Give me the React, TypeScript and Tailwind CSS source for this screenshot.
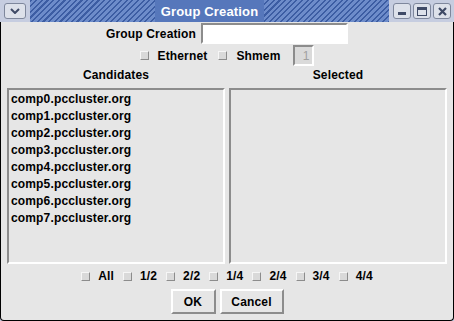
import React from 'react'

const HOSTS = Array.from({ length: 8 }, (_, i) => `comp${i}.pccluster.org`)
const RANGES = ['All', '1/2', '2/2', '1/4', '2/4', '3/4', '4/4']

function Check({ label, gap = 'gap-[8px]' }: { label: string; gap?: string }) {
  return (
    <label className={`flex items-center ${gap}`}>
      <span className="w-[9px] h-[9px] bg-[#d9d9d9] border border-t-[#f6f6f6] border-l-[#f6f6f6] border-b-[#8c8c8c] border-r-[#8c8c8c]" />
      <span>{label}</span>
    </label>
  )
}

function TitleButton({ children, w = 'w-[18px]' }: { children: React.ReactNode; w?: string }) {
  return (
    <div className={`${w} h-[16px] rounded-[3px] border border-[#7e879c] bg-[#dde1ea] flex items-center justify-center text-[#3f4a66]`}>
      {children}
    </div>
  )
}

function Sunken({ className = '', children }: { className?: string; children?: React.ReactNode }) {
  return (
    <div className={`border-2 border-t-[#8c8c8c] border-l-[#8c8c8c] border-b-white border-r-white ${className}`}>
      {children}
    </div>
  )
}

export default function App() {
  return (
    <div
      className="w-[454px] h-[321px] flex flex-col bg-[#c6cde0] text-[12px] tracking-[0.15px] font-bold text-black select-none"
      style={{ fontFamily: '"Liberation Sans", Arial, sans-serif' }}
    >
      {/* title bar */}
      <div className="h-[22px] flex items-center pl-[4px] pr-[3px] gap-[2px]">
        <TitleButton w="w-[22px]">
          <svg width="10" height="6" viewBox="0 0 10 6">
            <path d="M1 1 L5 5 L9 1" stroke="currentColor" strokeWidth="2" fill="none" />
          </svg>
        </TitleButton>
        <div className="flex-1 h-[22px] mx-[2px] flex items-center justify-center bg-[repeating-linear-gradient(135deg,#3c5da3_0px,#3c5da3_1.5px,#6d8cca_1.5px,#6d8cca_4px)]">
          <span className="px-[6px] bg-[#5677bb] text-white text-[13px] leading-[22px] pt-[1px]">Group Creation</span>
        </div>
        <TitleButton>
          <span className="w-[8px] h-[3px] bg-current mt-[4px]" />
        </TitleButton>
        <TitleButton>
          <span className="w-[10px] h-[9px] border border-current border-t-[3px]" />
        </TitleButton>
        <TitleButton>
          <svg width="9" height="9" viewBox="0 0 9 9">
            <path d="M1 1 L8 8 M8 1 L1 8" stroke="currentColor" strokeWidth="2.2" />
          </svg>
        </TitleButton>
      </div>

      {/* body */}
      <div className="flex-1 flex flex-col bg-[#e6e6e6] border border-t-0 border-black rounded-b-[4px] px-[6px]">
        <div className="mt-[1px] h-[21px] flex items-center justify-center gap-[5px]">
          <span>Group Creation</span>
          <Sunken className="w-[147px] h-[21px] bg-white" />
        </div>

        <div className="mt-[1px] h-[21px] flex items-center justify-center">
          <Check label="Ethernet" gap="gap-[9px]" />
          <div className="w-[11px]" />
          <Check label="Shmem" gap="gap-[9px]" />
          <div className="w-[13px]" />
          <Sunken className="w-[21px] h-[21px] bg-[#dadada] flex items-center justify-end pr-[3px] font-normal text-[#a0a0a0]">
            1
          </Sunken>
        </div>

        <div className="h-[18px] grid grid-cols-2 gap-[4px] items-center text-center">
          <span>Candidates</span>
          <span>Selected</span>
        </div>

        <div className="mt-[4px] h-[176px] grid grid-cols-2 gap-[4px]">
          <Sunken className="pl-[2px] pt-[1px] leading-[17px]">
            {HOSTS.map((h) => (
              <div key={h}>{h}</div>
            ))}
          </Sunken>
          <Sunken />
        </div>

        <div className="h-[24px] flex items-center justify-center gap-[9px]">
          {RANGES.map((r) => (
            <Check key={r} label={r} />
          ))}
        </div>

        <div className="mt-[1px] flex justify-center gap-[4px]">
          <button className="w-[45px] h-[25px] bg-[#e6e6e6] border-2 border-t-white border-l-white border-b-[#8c8c8c] border-r-[#8c8c8c] font-bold">
            OK
          </button>
          <button className="w-[64px] h-[25px] bg-[#e6e6e6] border-2 border-t-white border-l-white border-b-[#8c8c8c] border-r-[#8c8c8c] font-bold">
            Cancel
          </button>
        </div>
      </div>
    </div>
  )
}
